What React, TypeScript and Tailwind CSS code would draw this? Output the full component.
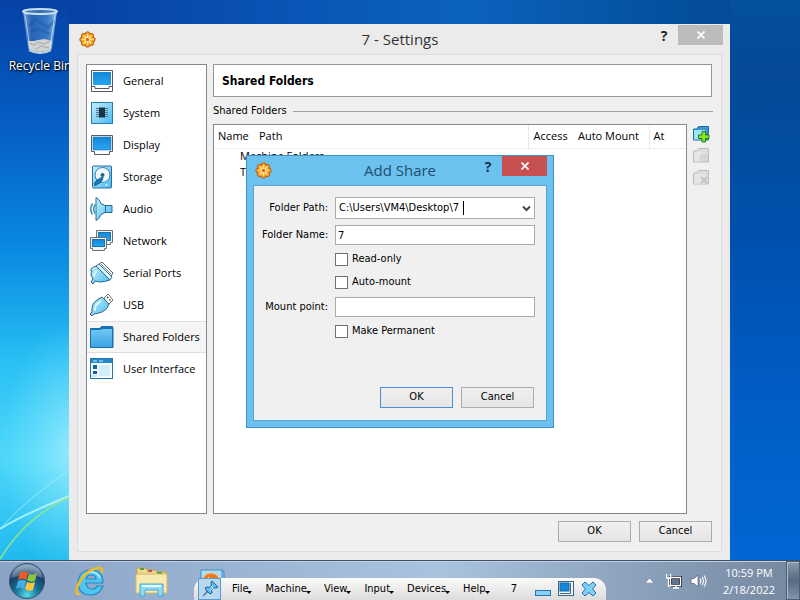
import React, { useState } from 'react';
import clsx from 'clsx';

const segoe = 'font-["Open_Sans","Noto_Sans",sans-serif]';
const tahoma = 'font-["DejaVu_Sans_Condensed","DejaVu_Sans",sans-serif]';

const sections = [
  { name: 'General', icon: <GeneralIcon /> },
  { name: 'System', icon: <SystemIcon /> },
  { name: 'Display', icon: <DisplayIcon /> },
  { name: 'Storage', icon: <StorageIcon /> },
  { name: 'Audio', icon: <AudioIcon /> },
  { name: 'Network', icon: <NetworkIcon /> },
  { name: 'Serial Ports', icon: <SerialIcon /> },
  { name: 'USB', icon: <UsbIcon /> },
  { name: 'Shared Folders', icon: <FolderIcon /> },
  { name: 'User Interface', icon: <InterfaceIcon /> },
];

const menus = ['File', 'Machine', 'View', 'Input', 'Devices', 'Help'];

export default function App() {
  return (
    <div className={clsx('relative flex h-screen flex-col overflow-hidden bg-[#0070d8] text-[11px] text-black', segoe)}>
      <Gradients />
      <Wallpaper />
      <main className="relative min-h-0 flex-1">
        <div className="absolute top-1 left-1 flex w-[72px] flex-col items-center gap-1">
          <RecycleBin />
          <span className="text-xs leading-4 whitespace-nowrap text-white [text-shadow:1px_1px_2px_#000,0_0_3px_#000]">Recycle Bin</span>
        </div>
        <SettingsWindow />
        <AddShareDialog />
      </main>
      <Taskbar />
    </div>
  );
}

function SettingsWindow() {
  const [active, setActive] = useState('Shared Folders');

  return (
    <section className="absolute top-6 right-[70px] bottom-0 left-[69px] flex flex-col bg-[#ebebeb] px-2 pb-2">
      <header className="-mr-px flex h-[30px] items-center">
        <div className="w-20 pl-0.5"><GearIcon /></div>
        <h1 className="flex-1 text-center text-[15px] text-[#333]">7 - Settings</h1>
        <div className="flex w-20 items-start justify-end self-stretch">
          <button aria-label="Help" className="h-6 w-7 text-sm font-bold text-[#222]">?</button>
          <button aria-label="Close" className="mt-px flex h-5 w-[45px] shrink-0 items-center justify-center bg-[#bcbcbc]"><CloseMark /></button>
        </div>
      </header>

      <div className="flex min-h-0 flex-1 flex-col gap-[7px] border border-[#dcdcdc] bg-[#f0f0f0] px-2 pt-[9px] pb-[9px]">
        <div className="flex min-h-0 flex-1 gap-1.5">
          <nav className="w-[121px] shrink-0 border border-[#828790] bg-white">
            {sections.map((s) => (
              <button
                key={s.name}
                onClick={() => setActive(s.name)}
                className={clsx(
                  'flex h-8 w-full items-center gap-[9px] border-y pl-[3px] text-left whitespace-nowrap',
                  active === s.name ? 'border-[#dedede] bg-[#f5f5f5]' : 'border-transparent'
                )}
              >
                {s.icon}
                {s.name}
              </button>
            ))}
          </nav>

          <div className="flex min-w-0 flex-1 flex-col">
            <h2 className={clsx('mr-px flex h-[33px] shrink-0 items-center border border-[#979797] bg-white px-2 text-xs font-bold', tahoma)}>Shared Folders</h2>
            <fieldset className="mt-1.5 flex min-h-0 flex-1 flex-col">
              <div className={clsx('flex h-[17px] items-center gap-1.5', tahoma)}>
                <span>Shared Folders</span>
                <hr className="flex-1 border-[#a0a0a0]" />
              </div>
              <div className="mt-1 flex min-h-0 flex-1 gap-0.5">
                <div className="min-w-0 flex-1 border border-[#828790] bg-white">
                  <table className="w-full table-fixed border-collapse text-left whitespace-nowrap">
                    <thead>
                      <tr className="h-[23px] border-b border-[#efefef]">
                        <th className="w-[41px] pl-1 font-normal">Name</th>
                        <th className="border-r border-[#e8e8e8] pl-1 font-normal">Path</th>
                        <th className="w-[46px] pl-[5px] font-normal">Access</th>
                        <th className="w-[75px] border-r border-[#e8e8e8] pl-1 font-normal">Auto Mount</th>
                        <th className="w-[37px] pl-1 font-normal">At</th>
                      </tr>
                    </thead>
                    <tbody>
                      <tr className="h-[17px] align-top leading-[13px]"><td colSpan={5} className="pl-[26px]">Machine Folders</td></tr>
                      <tr className="h-[17px] align-top leading-[13px]"><td colSpan={5} className="pl-[26px]">Transient Folders</td></tr>
                    </tbody>
                  </table>
                </div>
                <div className="flex w-6 flex-col items-center gap-1 pt-px">
                  <button aria-label="Add share"><ShareIcon kind="add" /></button>
                  <button aria-label="Edit share" disabled><ShareIcon kind="edit" /></button>
                  <button aria-label="Remove share" disabled><ShareIcon kind="remove" /></button>
                </div>
              </div>
            </fieldset>
          </div>
        </div>
        <footer className={clsx('flex justify-end gap-2 pr-px', tahoma)}>
          <DialogButton>OK</DialogButton>
          <DialogButton>Cancel</DialogButton>
        </footer>
      </div>
    </section>
  );
}

function AddShareDialog() {
  const [path, setPath] = useState('C:\\Users\\VM4\\Desktop\\7');
  const [name, setName] = useState('7');

  return (
    <section role="dialog" aria-label="Add Share" className="absolute top-[155px] left-1/2 w-[308px] -translate-x-1/2 border border-[#3d92c6] bg-[#6cc1ee] px-1.5 pb-1.5">
      <header className="flex h-[29px] items-center">
        <div className="w-[73px] pl-0.5"><GearIcon /></div>
        <h2 className="flex-1 text-center text-[15px] text-[#1d4f70]">Add Share</h2>
        <div className="flex w-[73px] items-start justify-end self-stretch">
          <button aria-label="Help" className="h-[22px] w-7 text-sm font-bold text-[#12354c]">?</button>
          <button aria-label="Close" className="flex h-5 w-[45px] shrink-0 items-center justify-center bg-[#c75050]"><CloseMark /></button>
        </div>
      </header>

      <form
        onSubmit={(e) => e.preventDefault()}
        className={clsx('flex flex-col border border-[#58a5cf] bg-[#f0f0f0] pt-[11px] pr-[11px] pb-3 pl-2', tahoma)}
      >
        <div className="flex items-center gap-[7px]">
          <label htmlFor="path" className="w-[66px] text-right whitespace-nowrap">Folder Path:</label>
          <div className="flex h-[22px] min-w-0 flex-1 border border-[#ababab] bg-white">
            <input id="path" value={path} onChange={(e) => setPath(e.target.value)} className="w-[127px] pl-[3px] outline-none" />
            <i className="my-[3px] w-px bg-black" />
            <button type="button" aria-label="Show paths" className="ml-auto px-[3px]">
              <svg width="9" height="7" viewBox="0 0 9 7"><path d="M1 1.500 4.500 5 8 1.500" fill="none" stroke="#484848" strokeWidth="2" /></svg>
            </button>
          </div>
        </div>
        <div className="mt-1.5 flex items-center gap-[7px]">
          <label htmlFor="name" className="w-[66px] text-right whitespace-nowrap">Folder Name:</label>
          <input id="name" value={name} onChange={(e) => setName(e.target.value)} className="h-5 min-w-0 flex-1 border border-[#ababab] bg-white px-0.5 outline-none" />
        </div>
        <div className="mt-[3px]"><CheckRow label="Read-only" /></div>
        <CheckRow label="Auto-mount" />
        <div className="mt-[3px] flex items-center gap-[7px]">
          <label htmlFor="mount" className="w-[66px] text-right whitespace-nowrap">Mount point:</label>
          <input id="mount" className="h-5 min-w-0 flex-1 border border-[#ababab] bg-white px-0.5 outline-none" />
        </div>
        <div className="mt-[3px]"><CheckRow label="Make Permanent" /></div>
        <div className="mt-11 flex justify-end gap-2 pr-px">
          <DialogButton primary>OK</DialogButton>
          <DialogButton>Cancel</DialogButton>
        </div>
      </form>
    </section>
  );
}

function CheckRow({ label }: { label: string }) {
  return (
    <label className="ml-[73px] flex h-[23px] items-center gap-1">
      <input type="checkbox" className="size-[13px] appearance-none border border-[#707070] bg-white checked:bg-[#3c7fb1]" />
      {label}
    </label>
  );
}

function DialogButton({ children, primary = false }: { children: React.ReactNode; primary?: boolean }) {
  return (
    <button
      type="button"
      className={clsx(
        'h-[21px] w-[73px] border bg-linear-to-b from-[#f0f0f0] to-[#e5e5e5]',
        primary ? 'border-[#4a8ed6]' : 'border-[#acacac]'
      )}
    >
      {children}
    </button>
  );
}

function Taskbar() {
  return (
    <footer className="relative flex h-10 shrink-0 items-center border-t border-[#3f4f68] bg-linear-to-r from-[#8ba3c6] via-[#a9c3df] via-55% to-[#75879f] pl-[9px] shadow-[inset_0_1px_0_#c0d2e6]">
      <button aria-label="Start"><StartOrb /></button>
      <button aria-label="Internet Explorer" className="ml-[28px]"><ExplorerE /></button>
      <button aria-label="File Explorer" className="ml-[28px]"><FilesIcon /></button>
      <button aria-label="Media Player" className="ml-[30px]"><MediaIcon /></button>

      {/* mini toolbar of the virtual machine */}
      <div className={clsx('absolute bottom-0 left-[194px] flex h-[22px] w-[412px] items-center rounded-t-xl bg-linear-to-b from-[#fbfbfb] to-[#dcdcdc] pl-1', tahoma)}>
        <button aria-label="Pin toolbar" className="flex h-[22px] w-[23px] items-center justify-center border border-[#5b9bd0] bg-[#b8d8f0]"><PinIcon /></button>
        <div className="flex gap-[13px] pl-[11px]">
          {menus.map((m) => (
            <button key={m} className="flex items-center">
              {m}
              <svg width="5" height="3" viewBox="0 0 5 3" className="-ml-px mt-1.5"><path d="M0 0h5L2.500 3z" fill="#000" /></svg>
            </button>
          ))}
        </div>
        <span className="mr-[18px] ml-auto">7</span>
        <div className="flex items-center gap-[7px] pr-[9px]">
          <button aria-label="Minimize">
            <svg width="16" height="16" viewBox="0 0 16 16"><rect x=".5" y="9.500" width="15" height="5" fill="#84d0f6" stroke="#2c76ad" /></svg>
          </button>
          <button aria-label="Restore">
            <svg width="16" height="16" viewBox="0 0 16 16">
              <rect x=".5" y=".5" width="15" height="14" fill="#e8f4fc" stroke="#45657f" />
              <path d="M12.500 2v10.500H2" fill="none" stroke="#45657f" />
              <rect x="2" y="2" width="9" height="8" fill="#1688d8" stroke="#1265a5" />
            </svg>
          </button>
          <button aria-label="Close machine">
            <svg width="16" height="16" viewBox="0 0 16 16"><path d="m4 1 4 3.500L12 1l3 3-3.500 4 3.500 4-3 3-4-3.500L4 15l-3-3 3.500-4L1 4z" fill="#7bd1f7" stroke="#246ba3" strokeLinejoin="round" /></svg>
          </button>
        </div>
      </div>

      <div className="ml-auto flex items-center text-white">
        <svg width="9" height="5" viewBox="0 0 9 5"><path d="M4.500 0 9 5H0z" fill="#fff" stroke="#52647c" strokeWidth=".5" /></svg>
        <svg width="16" height="16" viewBox="0 0 16 16" className="ml-3">
          <path d="M4.500 4.500h10v8h-10z" fill="#617590" stroke="#1d2b3c" strokeWidth="3" />
          <path d="M4.500 4.500h10v8h-10zM7 15h6M10 13v2M.5 1v4h4V1M2.500 5v8H5" fill="none" stroke="#fff" strokeWidth="1.300" />
        </svg>
        <svg width="17" height="16" viewBox="0 0 17 16" className="ml-2">
          <path d="M1 5.500h3L8 2v12l-4-3.500H1z" fill="#fff" stroke="#4a5a70" strokeWidth=".7" />
          <path d="M10 5.500q1.800 2.500 0 5M12 4q3 4 0 8M14 2.500q4 5.500 0 11" fill="none" stroke="#fff" strokeWidth="1.100" />
        </svg>
        <time className="ml-[14px] w-[56px] text-center text-[11px] leading-[17px] whitespace-nowrap">10:59 PM<br />2/18/2022</time>
        <button aria-label="Show desktop" className="ml-[9px] h-[39px] w-[14px] border border-[#4d5d73] bg-linear-to-b from-[#8b9bae] via-[#576980] to-[#8494aa] shadow-[inset_1px_1px_0_#aebccb]" />
      </div>
    </footer>
  );
}

/* ---------- artwork ---------- */

function Gradients() {
  return (
    <svg width="0" height="0" className="absolute" aria-hidden="true">
      <defs>
        <linearGradient id="screen" x1="0" y1="0" x2="0" y2="1"><stop offset="0" stopColor="#1487d6" /><stop offset="1" stopColor="#27a5f4" /></linearGradient>
        <linearGradient id="pale" x1="0" y1="0" x2="1" y2="1"><stop offset="0" stopColor="#c5effd" /><stop offset="1" stopColor="#49bbef" /></linearGradient>
        <linearGradient id="folder" x1="0" y1="0" x2="0" y2="1"><stop offset="0" stopColor="#72c8f4" /><stop offset="1" stopColor="#3ba1e5" /></linearGradient>
        <linearGradient id="glass" x1="0" y1="0" x2="1" y2="0"><stop offset="0" stopColor="#7fabdc" /><stop offset=".25" stopColor="#2c66b5" /><stop offset=".7" stopColor="#3a7cc8" /><stop offset="1" stopColor="#9ac6ea" /></linearGradient>
        <radialGradient id="orb" cx=".5" cy=".9" r=".9"><stop offset="0" stopColor="#55dbea" /><stop offset=".35" stopColor="#1c779f" /><stop offset=".7" stopColor="#173e65" /><stop offset="1" stopColor="#8ca8bd" /></radialGradient>
      </defs>
    </svg>
  );
}

function Wallpaper() {
  return (
    <svg className="absolute inset-0 h-full w-full" viewBox="0 0 800 600" preserveAspectRatio="none" aria-hidden="true">
      <defs>
        <linearGradient id="left" x1="0" y1="0" x2="0" y2="1">
          <stop offset="0" stopColor="#0642a6" /><stop offset=".2" stopColor="#065cc2" /><stop offset=".42" stopColor="#098be2" />
          <stop offset=".6" stopColor="#28bff4" /><stop offset=".76" stopColor="#4ed8fa" /><stop offset="1" stopColor="#0daeea" />
        </linearGradient>
        <linearGradient id="right" x1="0" y1="0" x2="0" y2="1">
          <stop offset="0" stopColor="#04509f" /><stop offset=".12" stopColor="#044a96" /><stop offset=".4" stopColor="#0050ae" />
          <stop offset=".7" stopColor="#005fc8" /><stop offset="1" stopColor="#0068d6" />
        </linearGradient>
        <linearGradient id="top" x1="0" y1="0" x2="1" y2="0">
          <stop offset="0" stopColor="#0642a6" /><stop offset=".35" stopColor="#0a55b5" /><stop offset=".6" stopColor="#0c62bd" /><stop offset=".9" stopColor="#04509f" /><stop offset="1" stopColor="#044c99" />
        </linearGradient>
        <radialGradient id="glow"><stop offset="0" stopColor="#c8f8ff" stopOpacity=".6" /><stop offset="1" stopColor="#8cecff" stopOpacity="0" /></radialGradient>
      </defs>
      <rect width="400" height="600" fill="url(#left)" />
      <rect x="400" width="400" height="600" fill="url(#right)" />
      <path d="M69 0h661v24H69z" fill="url(#top)" />
      <ellipse cx="75" cy="450" rx="75" ry="130" fill="url(#glow)" />
      <path d="M0 529q22-14 72-34" fill="none" stroke="#bdf7ff" strokeWidth="2" opacity=".8" />
      <path d="M0 529q25-29 72-61" fill="none" stroke="#a9f2ff" opacity=".7" />
      <path d="M0 559q27-44 72-63" fill="none" stroke="#8fe58b" strokeWidth="1.500" />
    </svg>
  );
}

function RecycleBin() {
  return (
    <svg width="40" height="50" viewBox="0 0 40 50">
      <path d="M3 7 8 45q12 7 24 0l5-38z" fill="url(#glass)" opacity=".9" />
      <path d="m8 37 1 8q11 6 22 0l1-8-7-2-7 1-4 1z" fill="#d0d3d1" />
      <path d="m9 39 5 2 5-3 5 2 6-3M15 46l6-4 8 2" fill="none" stroke="#a6a9a6" />
      <ellipse cx="20" cy="7.500" rx="17" ry="2.500" fill="#3a6dad" stroke="#c5dff0" strokeWidth="2" />
      <path d="m9 22 7-7 12 9 6-7M11 27l8-2 11 5" fill="none" stroke="#1c58a8" strokeWidth="3" opacity=".45" />
      <path d="m5 10 5 34M35 10l-5 34" stroke="#e4f5ff" opacity=".6" />
      <path d="M9 46q11 6 22 0" fill="none" stroke="#bed0dc" strokeWidth="2" />
    </svg>
  );
}

function GearIcon() {
  return (
    <svg width="17" height="17" viewBox="0 0 17 17">
      <g fill="#f7a823" stroke="#bc5312">
        <circle cx="8.500" cy="3" r="2.200" /><circle cx="12.400" cy="4.600" r="2.200" /><circle cx="14" cy="8.500" r="2.200" /><circle cx="12.400" cy="12.400" r="2.200" />
        <circle cx="8.500" cy="14" r="2.200" /><circle cx="4.600" cy="12.400" r="2.200" /><circle cx="3" cy="8.500" r="2.200" /><circle cx="4.600" cy="4.600" r="2.200" />
      </g>
      <circle cx="8.500" cy="8.500" r="5.500" fill="#fbb030" />
      <path d="M8.500 3.500v10M3.500 8.500h10M5 5l7 7M12 5l-7 7" stroke="#ffe9a0" strokeWidth="1.200" />
      <circle cx="8.500" cy="8.500" r="1.600" fill="#e25b1b" />
    </svg>
  );
}

function CloseMark() {
  return (
    <svg width="8" height="8" viewBox="0 0 8 8"><path d="m.5.500 7 7m0-7-7 7" stroke="#fff" strokeWidth="1.600" /></svg>
  );
}

function GeneralIcon() {
  return (
    <svg width="24" height="24" viewBox="0 0 24 24">
      <path d="M1.500 1.500h21v21h-21z" fill="#fff" stroke="#555b66" />
      <rect x="3" y="3" width="18" height="13" fill="url(#screen)" />
      <path d="M2 17.500h3v2h14v-2h3" fill="none" stroke="#555b66" />
    </svg>
  );
}

function SystemIcon() {
  return (
    <svg width="24" height="24" viewBox="0 0 24 24">
      <rect x="1.500" y="1.500" width="21" height="21" fill="url(#pale)" stroke="#287db0" />
      <path d="M6 7.500h12M6 9.500h12M6 11.500h12M6 13.500h12M6 15.500h12" stroke="#55788c" />
      <rect x="9" y="6.500" width="6" height="10" fill="#193447" />
    </svg>
  );
}

function DisplayIcon() {
  return (
    <svg width="24" height="24" viewBox="0 0 24 24">
      <path d="M1.500 2.500h21v16h-3v3h-15v-3h-3z" fill="#fff" stroke="#555b66" />
      <rect x="3" y="4" width="18" height="13" fill="url(#screen)" stroke="#1471b2" strokeWidth=".6" />
    </svg>
  );
}

function StorageIcon() {
  return (
    <svg width="24" height="24" viewBox="0 0 24 24">
      <rect x="2.500" y="1" width="19" height="22" rx="1" fill="url(#pale)" stroke="#236fa5" />
      <circle cx="12.500" cy="10" r="7.500" fill="#effaff" stroke="#3b7da8" />
      <circle cx="12.500" cy="10" r="2" fill="#34617f" />
      <path d="M13 12q0 5-5 7l-3 2-1-2 2-3q3-3 7-4z" fill="#1478c0" stroke="#155582" strokeWidth=".8" />
      <path d="M15 20h3" stroke="#f4fbff" />
    </svg>
  );
}

function AudioIcon() {
  return (
    <svg width="24" height="24" viewBox="0 0 24 24">
      <path d="M5 7.500Q2.500 12 5 16.500M2.500 6.500Q-1 12 2.500 17.500" fill="none" stroke="#2d86b8" strokeWidth="1.400" />
      <path d="M6 .5q3 1 5 6l4 2h7v7h-7l-4 2q-2 5-5 6z" fill="url(#pale)" stroke="#286b95" />
      <path d="M15.500 8.500v7" stroke="#286b95" />
    </svg>
  );
}

function NetworkIcon() {
  return (
    <svg width="24" height="24" viewBox="0 0 24 24">
      <path d="M6.500 1.500h16v12h-2v2h-12v-2h-2z" fill="#f5f5f0" stroke="#6c716f" />
      <rect x="8.500" y="3.500" width="12" height="8" fill="url(#screen)" stroke="#1474b6" />
      <path d="M.5 8.500h16v11h-2v2h-12v-2h-2z" fill="#f5f5f0" stroke="#6c716f" />
      <rect x="2.500" y="10.500" width="12" height="7" fill="url(#screen)" stroke="#1474b6" />
    </svg>
  );
}

function SerialIcon() {
  return (
    <svg width="24" height="24" viewBox="0 0 24 24">
      <path d="m9 3 3-2 11 11-2 3z" fill="#f7fbfd" stroke="#4f6471" strokeLinejoin="round" />
      <path d="m11 3 10 10" stroke="#718590" />
      <path d="m6 5 3-2 13 13-2 3z" fill="#d8f1fb" stroke="#3c6e8c" strokeLinejoin="round" />
      <path d="m6 5 14 14q-6 2-10 2l-5-1-2 3-2-2 2-3-2-4q0-3 1-4-2 0-1-2 2-2 5-3z" fill="url(#pale)" stroke="#27678e" strokeLinejoin="round" />
      <path d="M4 16q0-4 3-6" fill="none" stroke="#e6faff" strokeWidth="1.500" />
    </svg>
  );
}

function UsbIcon() {
  return (
    <svg width="24" height="24" viewBox="0 0 24 24">
      <path d="m14 5 4-4 5 6-5 5z" fill="#fff" stroke="#6f7174" />
      <path d="m17 4 1 1M19.500 6.500l1 1" stroke="#333" strokeWidth="1.500" />
      <path d="m12 4 7 7q-2 7-10 9l-5 1-2 2-2-2 2-2q-1-8 5-12z" fill="url(#pale)" stroke="#35677e" strokeLinejoin="round" />
      <path d="M5 18q-1-6 6-10" fill="none" stroke="#e6faff" strokeWidth="1.500" />
    </svg>
  );
}

function FolderIcon() {
  return (
    <svg width="24" height="24" viewBox="0 0 24 24">
      <path d="M.5 3.500h9l2-2h11l.5 2v19H.5z" fill="#1674b6" stroke="#176eaa" />
      <path d="M1 5h9.500l2-1H22v18H1z" fill="url(#folder)" />
    </svg>
  );
}

function InterfaceIcon() {
  return (
    <svg width="24" height="24" viewBox="0 0 24 24">
      <rect x=".5" y="1.500" width="22" height="20" fill="#f2fafe" stroke="#2775ac" />
      <path d="M1 2h21v4H1z" fill="#2389cb" />
      <path d="M3 4h4M9 4h4" stroke="#c9efff" />
      <rect x="3" y="8" width="4" height="4" fill="#175f98" /><rect x="3" y="14" width="4" height="3" fill="#175f98" />
      <path d="M9 8h11v11H9z" fill="#d2eefa" />
      <path d="M1 19h6" stroke="#98cce8" />
    </svg>
  );
}

function ShareIcon({ kind }: { kind: 'add' | 'edit' | 'remove' }) {
  const off = kind !== 'add';
  return (
    <svg width="18" height="18" viewBox="0 0 18 18">
      <path d="M1.500 4h3l2-2.500h10V15h-15z" fill={off ? '#dedede' : '#3c94d0'} stroke={off ? '#bcbcbc' : '#216ca4'} />
      <path d="M2 5h11v9.500H2z" fill={off ? '#e5e5e5' : '#9ce4fb'} />
      {kind === 'add' && <path d="M10 6.500h3.500V10H17v3.500h-3.500V17H10v-3.500H6.500V10H10z" fill="#88e522" stroke="#267e16" />}
      {kind === 'edit' && <g fill="#e2e2e2" stroke="#c2c2c2"><circle cx="12" cy="11" r="3.500" /><circle cx="12" cy="11" r="1" /></g>}
      {kind === 'remove' && <path d="m9 8 6 6m0-6-6 6" stroke="#c2c2c2" strokeWidth="2" />}
    </svg>
  );
}

function StartOrb() {
  return (
    <svg width="36" height="36" viewBox="0 0 36 36">
      <circle cx="18" cy="18" r="17.500" fill="url(#orb)" stroke="#33516c" />
      <path d="M3 15a15 13 0 0 1 30 0q-15-7-30 0" fill="#fff" opacity=".25" />
      <path d="M11 10q4-3 8 0l-2 7q-4-3-8 0z" fill="#ee5924" />
      <path d="M20 11q4 2 8-1l-2 8q-4 2-8-1z" fill="#8bc540" />
      <path d="M9 18q4-2 8 0l-2 8q-4-3-8 0z" fill="#43aee7" />
      <path d="M18 19q4 2 8 0l-2 8q-4 2-8-1z" fill="#fdc638" />
    </svg>
  );
}

function ExplorerE() {
  return (
    <svg width="34" height="34" viewBox="0 0 34 34">
      <path d="M30 19H13q1 6 6 6 4 0 5-3h6q-3 9-12 9Q6 31 5 19 6 6 18 6q12 0 12 13M13 15h10q0-4-5-4-4 0-5 4" fill="#51c4ef" stroke="#2089c7" strokeWidth="1.200" fillRule="evenodd" />
      <path d="M8 16q2-7 9-8 8 0 10 6" fill="none" stroke="#c3f1ff" strokeWidth="1.500" />
      <path d="M29 9q1-6-4-5-13 2-20 17-4 10 2 9" fill="none" stroke="#edbc27" strokeWidth="2.500" />
    </svg>
  );
}

function FilesIcon() {
  return (
    <svg width="34" height="32" viewBox="0 0 34 32">
      <path d="M2 3h8l2 2h8l2 2h9v19H2z" fill="#ead98f" stroke="#c3a24a" />
      <path d="M5 4h4M22 8h5" stroke="#5b9d3d" strokeWidth="2" />
      <path d="M13 6h4" stroke="#d34b32" strokeWidth="2" />
      <path d="M1 9h31v19H1z" fill="#f7eab0" stroke="#d4b962" />
      <path d="M5 31V19h23v12h-5v-6H10v6z" fill="#8ddaf3" stroke="#4aa7ca" />
      <path d="M7 21h19" stroke="#e6fbff" strokeWidth="2" />
    </svg>
  );
}

function MediaIcon() {
  return (
    <svg width="28" height="26" viewBox="0 0 28 26">
      <path d="M4 3h21v21H4z" fill="#8bc6e9" stroke="#3b8dbd" />
      <path d="M2 2h21v21H2z" fill="#afdcf3" stroke="#438fbe" />
      <circle cx="12" cy="14" r="9" fill="#ed7a23" stroke="#f8bd79" />
      <path d="m9 9 8 5-8 5z" fill="#fff" />
    </svg>
  );
}

function PinIcon() {
  return (
    <svg width="18" height="18" viewBox="0 0 18 18">
      <path d="m7 10-5 6 6-5" fill="#ddeef7" stroke="#3c6786" />
      <path d="m11 1 6 6-2 1-2-.500-2.500 2.500.500 3-2 1-5-5 1-2 3 .500L10.500 5 10 3z" fill="#62bdf0" stroke="#175f98" strokeLinejoin="round" />
      <path d="m10 6 2 2-3 3" fill="none" stroke="#c9f0ff" />
    </svg>
  );
}
